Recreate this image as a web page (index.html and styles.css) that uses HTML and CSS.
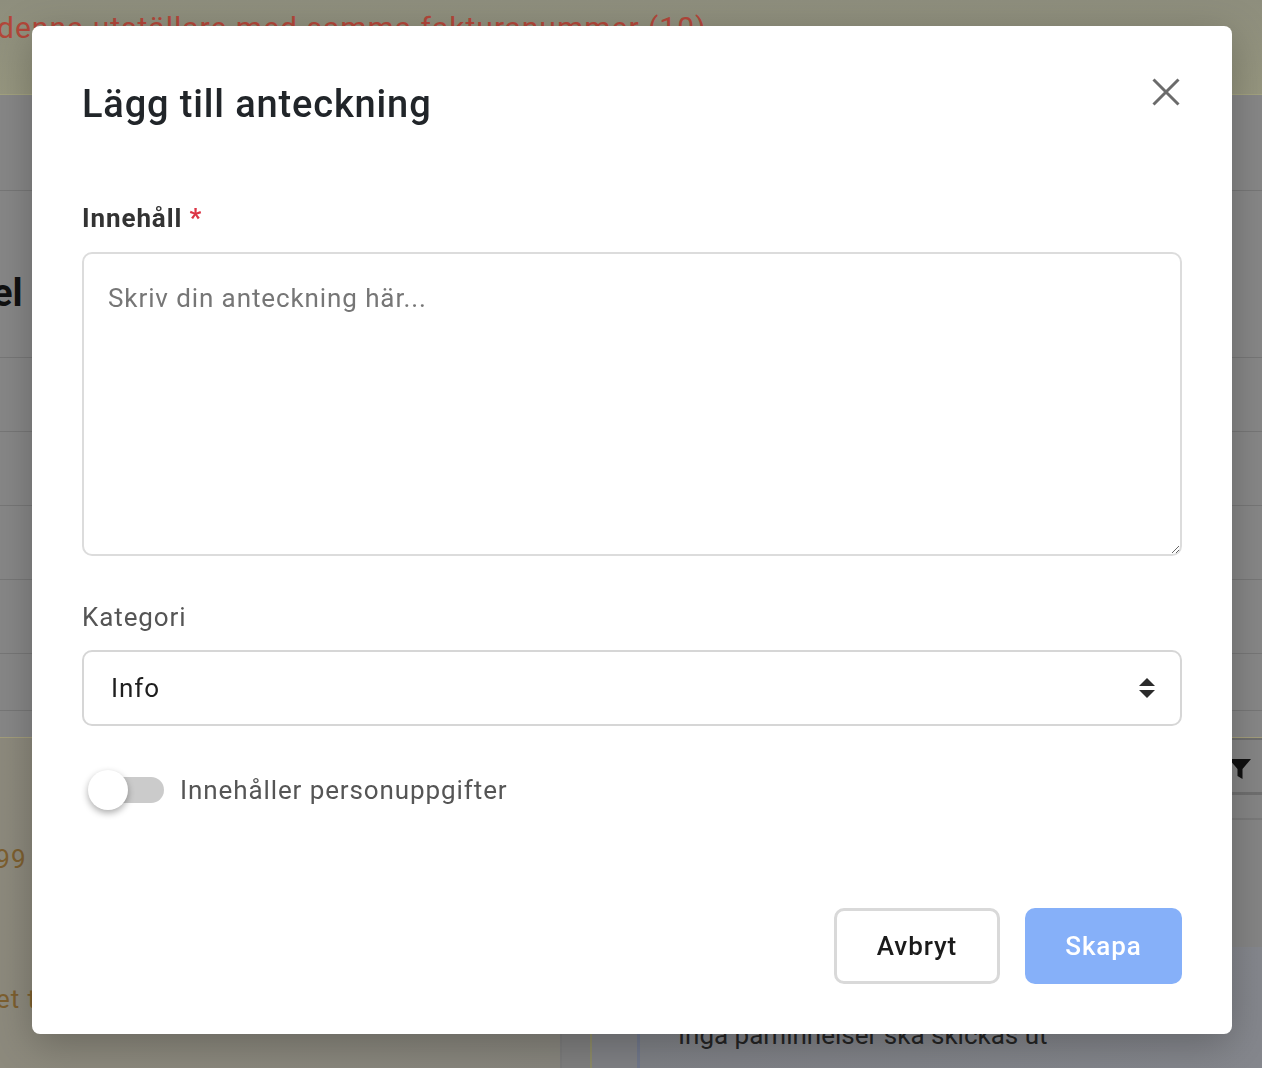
FILE: index.html
```html
<!DOCTYPE html>
<html lang="sv">
<head>
<meta charset="utf-8">
<title>Lägg till anteckning</title>
<link rel="stylesheet" href="styles.css">
</head>
<body>
<div class="page">
  <div class="banner"><span class="warn">denna utställare med samma fakturanummer (10)</span></div>
  <div class="rows">
    <div class="row r1"></div>
    <div class="row r2"><span class="heading">el</span></div>
    <div class="row r3"></div>
    <div class="row r3"></div>
    <div class="row r3"></div>
    <div class="row r3"></div>
    <div class="row r4"></div>
    <div class="row r5"></div>
  </div>
  <div class="lower">
    <div class="lower-left">
      <div class="amount">1 099</div>
      <div class="note">et t</div>
    </div>
    <div class="lower-right">
      <div class="filter-bar">
        <svg class="filter-icon" viewBox="0 0 24 24" width="24" height="24"><path d="M1 2h22l-8.5 10v10l-5-3v-7z" fill="#111"/></svg>
      </div>
      <div class="thin-row"></div>
      <div class="spacer"></div>
      <div class="reminders">
        <div class="col-a"></div>
        <div class="col-b"></div>
        <div class="reminder-panel">Inga påminnelser ska skickas ut</div>
      </div>
    </div>
  </div>
</div>

<div class="modal" role="dialog" aria-labelledby="modal-title">
  <div class="modal-header">
    <h2 class="title" id="modal-title">Lägg till anteckning</h2>
    <button class="close" aria-label="Stäng">
      <svg viewBox="0 0 28 28" width="28" height="28"><path d="M1.5 1.5L26.5 26.5M26.5 1.5L1.5 26.5" stroke="#6b6b6b" stroke-width="3" fill="none"/></svg>
    </button>
  </div>

  <label class="field-label" for="content">Innehåll <span class="req">*</span></label>
  <textarea id="content" class="textarea" placeholder="Skriv din anteckning här..."></textarea>

  <div class="plain-label">Kategori</div>
  <div class="select">
    <span class="select-value">Info</span>
    <svg class="select-arrows" viewBox="0 0 16 20" width="16" height="20"><path d="M8 0L16 8H0z M0 12H16L8 20z" fill="#2b2b2b"/></svg>
  </div>

  <div class="toggle-row">
    <div class="switch">
      <span class="track"></span>
      <span class="knob"></span>
    </div>
    <span class="toggle-label">Innehåller personuppgifter</span>
  </div>

  <div class="footer">
    <button class="btn btn-cancel">Avbryt</button>
    <button class="btn btn-primary">Skapa</button>
  </div>
</div>
</body>
</html>
```
FILE: styles.css
```css
* { box-sizing: border-box; }

html, body {
  margin: 0;
  padding: 0;
}

body {
  font-family: Roboto, "Noto Sans", "Liberation Sans", sans-serif;
  width: 1262px;
  height: 1068px;
  overflow: hidden;
}

/* ---------- dimmed page behind the dialog ---------- */
.page {
  width: 1262px;
  height: 1068px;
  overflow: hidden;
  display: flex;
  flex-direction: column;
  background: #868686;
}

.banner {
  height: 95px;
  flex: none;
  background: linear-gradient(#8e8e7d, #96967f);
  border-bottom: 1px solid #a2a27f;
  padding-top: 10px;
  white-space: nowrap;
}

.warn {
  display: inline-block;
  margin-left: -3px;
  font-size: 30px;
  line-height: 36px;
  letter-spacing: 1px;
  color: #b3473a;
}

.rows {
  flex: none;
  display: flex;
  flex-direction: column;
}

.row {
  border-bottom: 1px solid #777777;
  background: #878787;
}

.r1 { height: 96px; }
.r2 {
  height: 167px;
  padding-top: 80px;
}
.r3 { height: 74px; }
.r4 { height: 57px; }
.r5 { height: 26px; border-bottom: none; }

.heading {
  display: inline-block;
  margin-left: -8px;
  font-size: 38px;
  line-height: 44px;
  font-weight: 700;
  color: #111;
}

.lower {
  flex: 1;
  display: flex;
  border-top: 1px solid #a39e7c;
}

.lower-left {
  width: 562px;
  flex: none;
  background: linear-gradient(90deg, #8d8a7d, #87857d);
  border-right: 2px solid #7b7b7b;
  padding-top: 106px;
}

.amount, .note {
  margin-left: -43px;
  font-size: 26px;
  line-height: 30px;
  letter-spacing: 0.9px;
  color: #7d5f2f;
  white-space: nowrap;
}

.note {
  margin-top: 110px;
  margin-left: -4px;
}

.lower-right {
  flex: 1;
  display: flex;
  flex-direction: column;
  background: #858585;
}

.filter-bar {
  height: 57px;
  border-top: 2px solid #6f6f6f;
  border-bottom: 3px solid #6f6f6f;
  display: flex;
  justify-content: flex-end;
  align-items: center;
  padding-right: 10px;
  padding-top: 6px;
}

.thin-row {
  height: 25px;
  border-bottom: 2px solid #7a7a7a;
}

.spacer {
  height: 127px;
}

.reminders {
  flex: 1;
  display: flex;
  background: linear-gradient(90deg, #7d7f84, #85878d);
}

.col-a {
  width: 30px;
  border-right: 2px solid #8c8a68;
  background: #7f7f7f;
}

.col-b {
  width: 48px;
  border-right: 3px solid #70778a;
  background: #7f8084;
}

.reminder-panel {
  padding: 73px 0 0 38px;
  font-size: 26px;
  line-height: 30px;
  color: #242424;
}

/* ---------- dialog ---------- */
.modal {
  position: fixed;
  left: 32px;
  top: 26px;
  width: 1200px;
  height: 1008px;
  padding: 55px 50px 50px;
  background: #fff;
  border-radius: 8px;
  box-shadow: 0 10px 40px rgba(0, 0, 0, 0.25);
  display: flex;
  flex-direction: column;
  letter-spacing: 0.9px;
}

.modal-header {
  display: flex;
  justify-content: space-between;
  align-items: flex-start;
}

.title {
  margin: 0;
  font-size: 38px;
  line-height: 46px;
  font-weight: 500;
  letter-spacing: 0.85px;
  color: #212529;
}

.close {
  margin: -3px 2px 0 0;
  padding: 0;
  width: 28px;
  height: 28px;
  border: none;
  background: none;
  display: flex;
}

.field-label {
  margin-top: 72px;
  font-size: 26px;
  line-height: 39px;
  font-weight: 700;
  color: #333;
}

.req {
  color: #dc3545;
}

.textarea {
  display: block;
  margin-top: 14px;
  width: 100%;
  height: 304px;
  padding: 25px 24px;
  border: 2px solid #dcdcdc;
  border-radius: 10px;
  font-family: Roboto, "Noto Sans", sans-serif;
  font-size: 26px;
  line-height: 39px;
  letter-spacing: 0.9px;
  color: #222;
  resize: vertical;
  outline: none;
}

.textarea::placeholder {
  color: #767676;
}

.plain-label {
  margin-top: 42px;
  font-size: 26px;
  line-height: 39px;
  color: #555;
}

.select {
  margin-top: 13px;
  height: 76px;
  border: 2px solid #d6d6d6;
  border-radius: 10px;
  padding: 0 25px 0 27px;
  display: flex;
  align-items: center;
  justify-content: space-between;
}

.select-value {
  font-size: 26px;
  line-height: 39px;
  color: #1e1e1e;
}

.select-arrows {
  display: block;
}

.toggle-row {
  margin-top: 44px;
  height: 40px;
  display: flex;
  align-items: center;
}

.switch {
  position: relative;
  width: 76px;
  height: 40px;
  margin-left: 6px;
  flex: none;
}

.track {
  position: absolute;
  left: 2px;
  top: 7px;
  width: 74px;
  height: 26px;
  border-radius: 13px;
  background: #cbcbcb;
}

.knob {
  position: absolute;
  left: 0;
  top: 0;
  width: 40px;
  height: 40px;
  border-radius: 50%;
  background: #fff;
  box-shadow: 0 3px 7px rgba(0, 0, 0, 0.33);
}

.toggle-label {
  margin-left: 16px;
  font-size: 26px;
  line-height: 39px;
  color: #555;
}

.footer {
  margin-top: auto;
  display: flex;
  justify-content: flex-end;
  gap: 25px;
}

.btn {
  height: 76px;
  border-radius: 10px;
  font-family: Roboto, "Noto Sans", sans-serif;
  font-size: 26px;
  font-weight: 500;
  letter-spacing: 0.9px;
  cursor: pointer;
}

.btn-cancel {
  width: 166px;
  background: #fff;
  border: 3px solid #d9d9d9;
  color: #1b1b1b;
}

.btn-primary {
  width: 157px;
  background: #86b0f9;
  border: none;
  color: #fff;
}
```
